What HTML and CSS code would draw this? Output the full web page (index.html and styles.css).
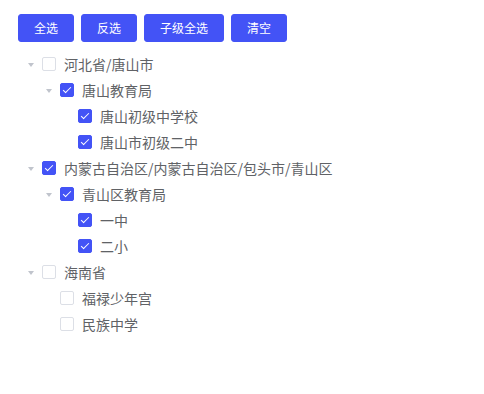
FILE: index.html
```html
<!DOCTYPE html>
<html>
<head>
  <meta charset="utf-8">
  <title>树形选择</title>
  <link rel="stylesheet" href="styles.css">
</head>
<body>
  <div id="container">
    <div class="toolbar">
      <button class="btn">全选</button>
      <button class="btn">反选</button>
      <button class="btn">子级全选</button>
      <button class="btn">清空</button>
    </div>

    <div class="tree">
      <div class="node">
        <span class="caret"></span><span class="check"></span><span class="label">河北省/唐山市</span>
      </div>
      <div class="node level-2">
        <span class="caret"></span><span class="check checked"></span><span class="label">唐山教育局</span>
      </div>
      <div class="node level-3">
        <span class="caret leaf"></span><span class="check checked"></span><span class="label">唐山初级中学校</span>
      </div>
      <div class="node level-3">
        <span class="caret leaf"></span><span class="check checked"></span><span class="label">唐山市初级二中</span>
      </div>
      <div class="node">
        <span class="caret"></span><span class="check checked"></span><span class="label">内蒙古自治区/内蒙古自治区/包头市/青山区</span>
      </div>
      <div class="node level-2">
        <span class="caret"></span><span class="check checked"></span><span class="label">青山区教育局</span>
      </div>
      <div class="node level-3">
        <span class="caret leaf"></span><span class="check checked"></span><span class="label">一中</span>
      </div>
      <div class="node level-3">
        <span class="caret leaf"></span><span class="check checked"></span><span class="label">二小</span>
      </div>
      <div class="node">
        <span class="caret"></span><span class="check"></span><span class="label">海南省</span>
      </div>
      <div class="node level-2">
        <span class="caret leaf"></span><span class="check"></span><span class="label">福禄少年宫</span>
      </div>
      <div class="node level-2">
        <span class="caret leaf"></span><span class="check"></span><span class="label">民族中学</span>
      </div>
    </div>
  </div>
</body>
</html>
```

FILE: styles.css
```css
body {
  margin: 0;
  background: #fff;
  font-family: "Noto Sans CJK SC", "Noto Sans", sans-serif;
}

#container {
  padding: 14px 18px;
}

.toolbar {
  display: flex;
  gap: 7px;
  margin-bottom: 9px;
}

.btn {
  height: 28px;
  padding: 0 15px;
  border: 1px solid #4353f6;
  border-radius: 3px;
  background-color: #4353f6;
  color: #fff;
  font-family: inherit;
  font-size: 12px;
  line-height: 26px;
}

.tree {
  color: #606266;
  font-size: 14px;
}

.node {
  display: flex;
  align-items: center;
  height: 26px;
}

.level-2 {
  padding-left: 18px;
}

.level-3 {
  padding-left: 36px;
}

.caret {
  width: 24px;
  height: 26px;
  position: relative;
}

.caret::after {
  content: "";
  position: absolute;
  left: 10px;
  top: 12px;
  border-left: 3px solid transparent;
  border-right: 3px solid transparent;
  border-top: 4px solid #c0c4cc;
}

.caret.leaf::after {
  display: none;
}

.check {
  width: 12px;
  height: 12px;
  border: 1px solid #dcdfe6;
  border-radius: 2px;
  margin-right: 8px;
  background: #fff;
  position: relative;
}

.check.checked {
  background: #4353f6;
  border-color: #4353f6;
}

.check.checked::after {
  content: "";
  position: absolute;
  left: 4px;
  top: 1px;
  width: 3px;
  height: 7px;
  border: 1px solid #fff;
  border-left: 0;
  border-top: 0;
  transform: rotate(45deg);
}

.label {
  line-height: 26px;
}
```
